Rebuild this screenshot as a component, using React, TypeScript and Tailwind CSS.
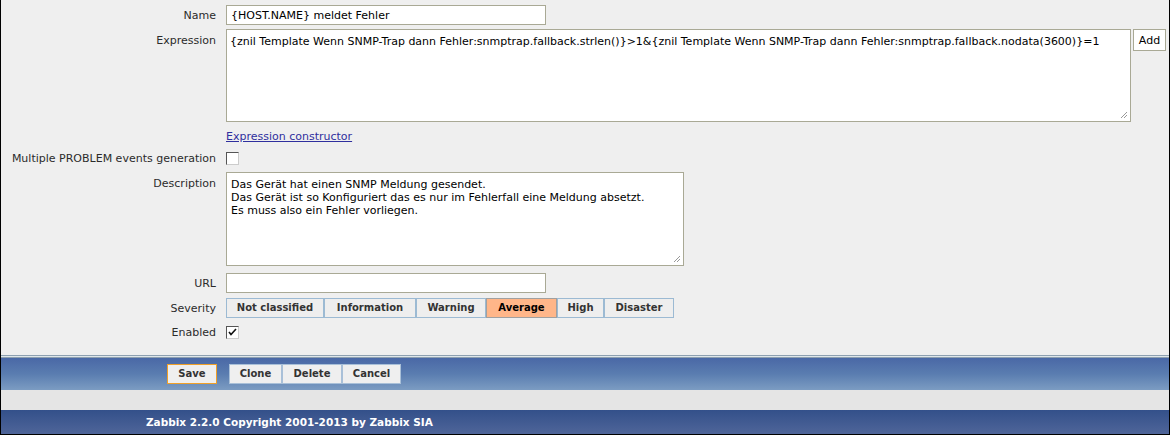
import React from "react";

const severities = [
  { label: "Not classified", w: "w-[98px]" },
  { label: "Information", w: "w-[92px]" },
  { label: "Warning", w: "w-[70px]" },
  { label: "Average", w: "w-[71px]", active: true },
  { label: "High", w: "w-[47px]" },
  { label: "Disaster", w: "w-[70px]" },
];

const expression =
  "{znil Template Wenn SNMP-Trap dann Fehler:snmptrap.fallback.strlen()}>1&{znil Template Wenn SNMP-Trap dann Fehler:snmptrap.fallback.nodata(3600)}=1";

function Label({ children }: { children: React.ReactNode }) {
  return (
    <div className="w-[225px] shrink-0 pr-[10px] text-right text-[#2b2b2b]">
      {children}
    </div>
  );
}

function Checkbox({ checked }: { checked?: boolean }) {
  return (
    <div className="flex h-[13px] w-[13px] items-center justify-center border border-t-[#555] border-l-[#555] border-b-[#ccc] border-r-[#ccc] bg-white">
      {checked && (
        <svg width="9" height="9" viewBox="0 0 9 9">
          <path d="M1 4 L3 6.5 L8 1" stroke="#111" strokeWidth="1.6" fill="none" />
        </svg>
      )}
    </div>
  );
}

export default function App() {
  return (
    <div className="flex h-[435px] w-[1170px] flex-col border-x border-b border-black bg-[#efefef] font-['DejaVu_Sans',sans-serif] text-[11px] leading-none">
      {/* form */}
      <div className="flex h-[355px] flex-col pt-[5px]">
        {/* Name */}
        <div className="flex h-[20px] items-center">
          <Label>Name</Label>
          <div className="flex h-[20px] w-[320px] items-center border border-[#a9a995] bg-white px-[4px] text-black">
            {"{HOST.NAME} meldet Fehler"}
          </div>
        </div>

        {/* Expression */}
        <div className="mt-[4px] flex items-start">
          <div className="pt-[6px]">
            <Label>Expression</Label>
          </div>
          <div className="relative h-[93px] w-[905px] overflow-hidden whitespace-nowrap border border-[#a9a995] bg-white px-[3px] pt-[6px] text-black">
            {expression}
            <svg className="absolute bottom-[2px] right-[2px]" width="8" height="8" viewBox="0 0 8 8">
              <path d="M7 1 L1 7 M7 4 L4 7" stroke="#999" strokeWidth="1" />
            </svg>
          </div>
          <div className="ml-[2px] flex h-[22px] w-[33px] items-center justify-center border border-[#a9a995] bg-white text-black">
            Add
          </div>
        </div>

        {/* Expression constructor */}
        <div className="mt-[9px] flex h-[10px] items-center">
          <div className="w-[225px] shrink-0" />
          <span className="text-[#2f2f9e] underline">Expression constructor</span>
        </div>

        {/* Multiple */}
        <div className="mt-[11px] flex h-[13px] items-center">
          <Label>Multiple PROBLEM events generation</Label>
          <Checkbox />
        </div>

        {/* Description */}
        <div className="mt-[7px] flex items-start">
          <div className="pt-[6px]">
            <Label>Description</Label>
          </div>
          <div className="relative h-[94px] w-[458px] border border-[#a9a995] bg-white px-[4px] pt-[5px] leading-[13px] text-black">
            <div>Das Gerät hat einen SNMP Meldung gesendet.</div>
            <div>Das Gerät ist so Konfiguriert das es nur im Fehlerfall eine Meldung absetzt.</div>
            <div>Es muss also ein Fehler vorliegen.</div>
            <svg className="absolute bottom-[2px] right-[2px]" width="8" height="8" viewBox="0 0 8 8">
              <path d="M7 1 L1 7 M7 4 L4 7" stroke="#999" strokeWidth="1" />
            </svg>
          </div>
        </div>

        {/* URL */}
        <div className="mt-[7px] flex h-[20px] items-center">
          <Label>URL</Label>
          <div className="h-[20px] w-[320px] border border-[#a9a995] bg-white" />
        </div>

        {/* Severity */}
        <div className="mt-[5px] flex h-[20px] items-center">
          <Label>Severity</Label>
          <div className="flex text-[10px]">
            {severities.map((s) => (
              <div
                key={s.label}
                className={
                  s.active
                    ? `${s.w} flex h-[20px] items-center justify-center border border-[#a0a0a0] bg-[#ffb689] font-bold text-black`
                    : `${s.w} flex h-[20px] items-center justify-center border border-[#9cbad3] bg-[#eeeeee] font-bold text-[#333]`
                }
              >
                {s.label}
              </div>
            ))}
          </div>
        </div>

        {/* Enabled */}
        <div className="mt-[8px] flex h-[13px] items-center">
          <Label>Enabled</Label>
          <Checkbox checked />
        </div>
      </div>

      {/* separator */}
      <div className="h-[1px] bg-[#8da0b0]" />
      <div className="h-[1px] bg-[#dfe6ea]" />
      <div className="h-[1px] bg-[#8da0b0]" />

      {/* button bar */}
      <div className="flex h-[32px] items-start bg-gradient-to-b from-[#4a68a6] via-[#5a7db0] to-[#7c9cc2] pl-[166px] pt-[6px] text-[10px]">
        <div className="flex h-[20px] w-[50px] items-center justify-center border border-[#f0a028] bg-[#efefef] font-bold text-[#333]">
          Save
        </div>
        <div className="ml-[12px] flex">
          <div className="flex h-[20px] w-[53px] items-center justify-center border border-[#a9c0d8] bg-[#efefef] font-bold text-[#333]">
            Clone
          </div>
          <div className="flex h-[20px] w-[60px] items-center justify-center border border-[#a9c0d8] bg-[#efefef] font-bold text-[#333]">
            Delete
          </div>
          <div className="flex h-[20px] w-[59px] items-center justify-center border border-[#a9c0d8] bg-[#efefef] font-bold text-[#333]">
            Cancel
          </div>
        </div>
      </div>

      <div className="h-[20px] bg-[#e5e5e5]" />

      {/* footer */}
      <div className="flex flex-1 items-center bg-gradient-to-b from-[#33508a] to-[#4f6599] pl-[145px] text-[10.5px] font-bold text-white">
        Zabbix 2.2.0 Copyright 2001-2013 by Zabbix SIA
      </div>
    </div>
  );
}
